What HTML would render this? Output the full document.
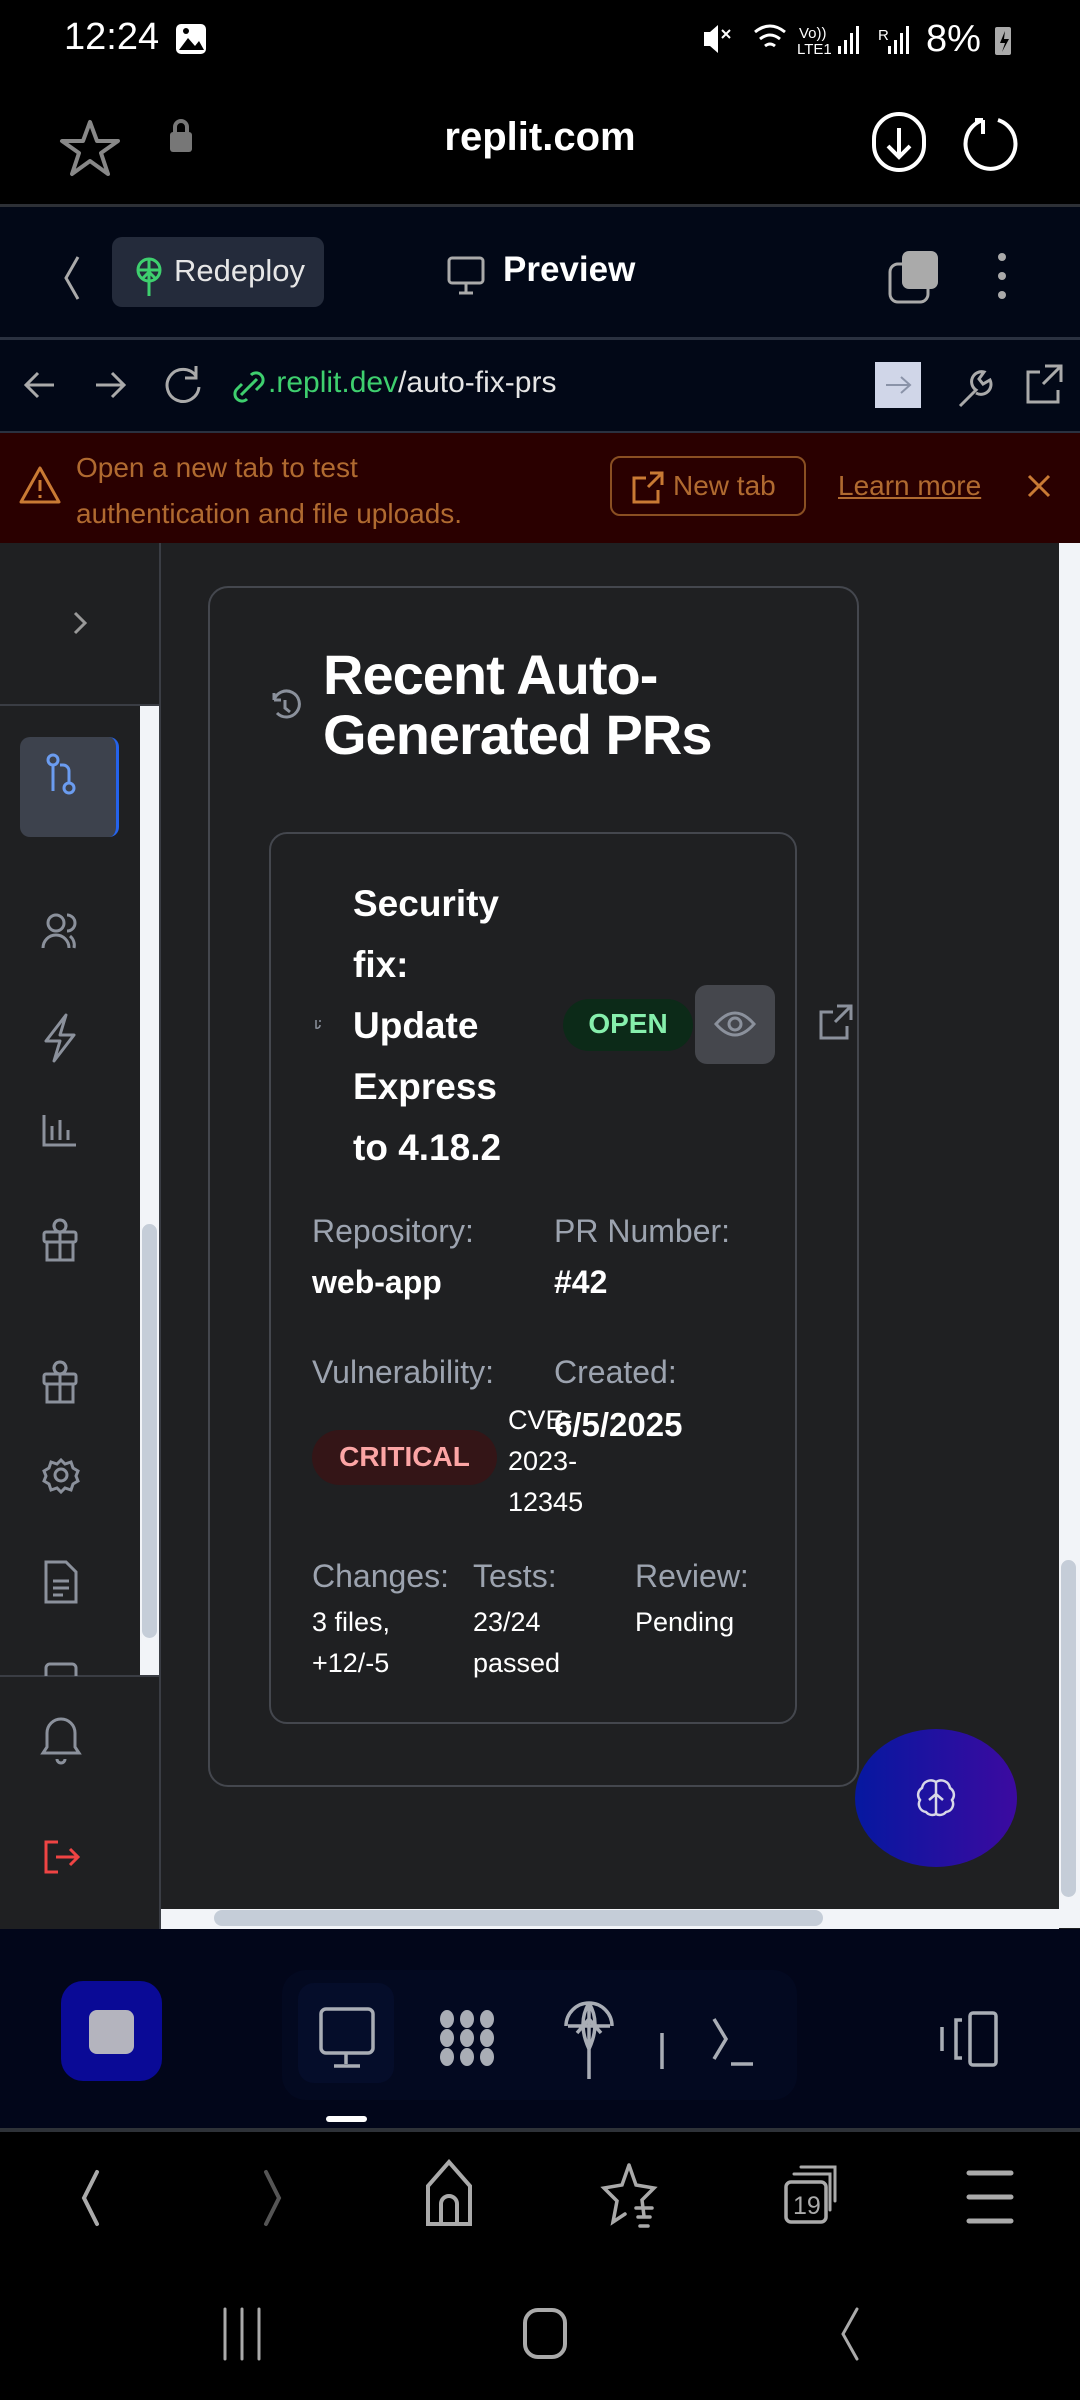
<!DOCTYPE html>
<html><head><meta charset="utf-8">
<style>
*{margin:0;padding:0;box-sizing:border-box}
body{width:1080px;height:2400px;background:#000;position:relative;overflow:hidden;font-family:"Liberation Sans",sans-serif;color:#fff}
.a{position:absolute}
svg{position:absolute;overflow:visible}
.t{white-space:nowrap}
</style></head><body>

<!-- status bar -->
<div class="a t" style="left:64px;top:16px;font-size:38px;color:#fff">12:24</div>
<div class="a" style="left:176px;top:24px;width:30px;height:30px;border-radius:5px;background:#fff"></div>
<svg style="left:0;top:0" width="1080" height="100"><path d="M179 50 L188 38 L195 46 L199 41 L204 50Z" fill="#000"/><circle cx="186" cy="31" r="3" fill="#000"/></svg>
<svg style="left:0;top:0" width="1080" height="100">
<path d="M704 32 h6 l8 -7 v28 l-8 -7 h-6z" fill="#fff"/><path d="M722 30 l8 8 M730 30 l-8 8" stroke="#fff" stroke-width="2"/>
<g stroke="#fff" stroke-width="3" fill="none"><path d="M755 32 q15-12 30 0"/><path d="M760 39 q10-8 20 0"/><path d="M765 46 q5-4 10 0"/></g>
<text x="799" y="38" font-size="15" fill="#fff" font-family="Liberation Sans">Vo))</text>
<text x="797" y="54" font-size="15" fill="#fff" font-family="Liberation Sans">LTE1</text>
<g fill="#fff"><rect x="838" y="46" width="3" height="8"/><rect x="844" y="40" width="3" height="14"/><rect x="850" y="33" width="3" height="21"/><rect x="856" y="26" width="3" height="28"/>
<rect x="888" y="46" width="3" height="8"/><rect x="894" y="40" width="3" height="14"/><rect x="900" y="33" width="3" height="21"/><rect x="906" y="26" width="3" height="28"/></g>
<text x="878" y="40" font-size="15" fill="#fff" font-family="Liberation Sans">R</text>
<rect x="995" y="27" width="16" height="28" rx="2" fill="#aaa"/><path d="M1005 31 l-5 12 h5 l-3 9 l7-13 h-5z" fill="#000"/>
</svg>
<div class="a t" style="left:926px;top:18px;font-size:38px">8%</div>

<!-- browser bar -->
<svg style="left:0;top:100px" width="1080" height="105">
<path d="M90 22 l7 19 h21 l-17 12 l7 21 l-18-13 l-18 13 l7-21 l-17-12 h21z" stroke="#888" stroke-width="4" fill="none" stroke-linejoin="round"/>
<rect x="170" y="32" width="22" height="20" rx="3" fill="#777"/><path d="M175 32 v-5 a6 6 0 0 1 12 0 v5" stroke="#777" stroke-width="4" fill="none"/>
<rect x="874" y="14" width="50" height="56" rx="25" stroke="#fff" stroke-width="4" fill="none"/><path d="M899 28 v28 M888 46 l11 11 l11-11" stroke="#fff" stroke-width="4" fill="none"/>
<path d="M983 20 a25 25 0 1 0 15 0 M983 20 v14 M983 20 h-8" stroke="#fff" stroke-width="4" fill="none"/>
</svg>
<div class="a t" style="left:0;width:1080px;text-align:center;top:115px;font-size:40px;font-weight:bold">replit.com</div>
<div class="a" style="left:0;top:204px;width:1080px;height:3px;background:#2d3036"></div>

<!-- replit header -->
<div class="a" style="left:0;top:207px;width:1080px;height:131px;background:#020817"></div>
<svg style="left:0;top:207px" width="1080" height="131">
<path d="M78 50 l-12 21 l12 21" stroke="#aaa" stroke-width="3" fill="none"/>
</svg>
<div class="a" style="left:112px;top:237px;width:212px;height:70px;border-radius:10px;background:#242b3b"></div>
<svg style="left:0;top:207px" width="1080" height="131">
<circle cx="149" cy="63" r="11" stroke="#3ecf6e" stroke-width="3" fill="none"/><path d="M138 63 h22 M149 52 v37 M142 72 l7-7 l7 7" stroke="#3ecf6e" stroke-width="3" fill="none"/>
<rect x="449" y="51" width="34" height="25" rx="3" stroke="#aaa" stroke-width="3" fill="none"/><path d="M466 77 v8 M459 86 h14" stroke="#aaa" stroke-width="3"/>
<rect x="890" y="57" width="38" height="38" rx="8" stroke="#aaa" stroke-width="3" fill="none"/><rect x="902" y="44" width="36" height="38" rx="7" fill="#aaa"/>
<circle cx="1002" cy="50" r="4" fill="#aaa"/><circle cx="1002" cy="69" r="4" fill="#aaa"/><circle cx="1002" cy="88" r="4" fill="#aaa"/>
</svg>
<div class="a t" style="left:174px;top:253px;font-size:31px;color:#e6e6e6">Redeploy</div>
<div class="a t" style="left:503px;top:250px;font-size:35px;font-weight:bold">Preview</div>
<div class="a" style="left:0;top:337px;width:1080px;height:3px;background:#2a3140"></div>

<!-- url row -->
<div class="a" style="left:0;top:340px;width:1080px;height:92px;background:#020817"></div>
<svg style="left:0;top:340px" width="1080" height="92">
<g stroke="#aaa" stroke-width="3" fill="none">
<path d="M54 45 h-28 M38 33 l-12 12 l12 12"/><path d="M96 45 h28 M112 33 l12 12 l-12 12"/>
<path d="M196 36 a16 16 0 1 0 3 11 M196 26 v12 h-11"/>
<path d="M241 55 l16-16 M247 59 a7 7 0 0 1 -10 -10 l5-5 M251 35 a7 7 0 0 1 10 10 l-5 5" stroke="#3ecf6e"/>
</g>
<rect x="875" y="22" width="46" height="46" fill="#d0d6e8"/><path d="M886 45 h24 M901 37 l9 8 l-9 8" stroke="#8a93a8" stroke-width="2" fill="none"/>
<g stroke="#aaa" stroke-width="3" fill="none"><path d="M960 66 l16-16 a10 10 0 0 1 8 -18 l-5 7 l4 5 l7 -4 a10 10 0 0 1 -14 13"/>
<path d="M1040 32 h-12 v30 h30 v-12 M1045 26 h16 v16 M1061 26 l-18 18"/></g>
</svg>
<div class="a t" style="left:268px;top:366px;font-size:30px;color:#3ecf6e">.replit.dev<span style="color:#e6e6e6">/auto-fix-prs</span></div>
<div class="a" style="left:0;top:431px;width:1080px;height:2px;background:#2a3140"></div>

<!-- banner -->
<div class="a" style="left:0;top:433px;width:1080px;height:110px;background:#2a0000"></div>
<svg style="left:0;top:433px" width="1080" height="110">
<path d="M40 35 l19 34 h-38z" stroke="#c97a34" stroke-width="3" fill="none" stroke-linejoin="round"/><path d="M40 47 v11 M40 62 v3" stroke="#c97a34" stroke-width="3"/>
<path d="M1029 43 l20 20 M1049 43 l-20 20" stroke="#c97a34" stroke-width="3"/>
<path d="M646 45 h-12 v24 h24 v-12 M650 40 h12 v12 M662 40 l-14 14" stroke="#c97a34" stroke-width="3" fill="none"/>
</svg>
<div class="a t" style="left:76px;top:445px;font-size:28px;color:#b06a30;line-height:46px">Open a new tab to test<br>authentication and file uploads.</div>
<div class="a" style="left:610px;top:456px;width:196px;height:60px;border:2px solid #8a4f22;border-radius:10px"></div>
<div class="a t" style="left:673px;top:470px;font-size:28px;color:#b06a30">New tab</div>
<div class="a t" style="left:838px;top:470px;font-size:28px;color:#b06a30;text-decoration:underline">Learn more</div>

<!-- content -->
<div class="a" style="left:0;top:543px;width:1080px;height:1386px;background:#1f2022"></div>
<div class="a" style="left:159px;top:543px;width:2px;height:1386px;background:#3a3d44"></div>
<div class="a" style="left:0;top:704px;width:160px;height:2px;background:#3a3d44"></div>
<div class="a" style="left:140px;top:706px;width:19px;height:970px;background:#f2f4f8"></div>
<div class="a" style="left:142px;top:1224px;width:15px;height:414px;border-radius:8px;background:#c5cdd8"></div>
<div class="a" style="left:0;top:1675px;width:160px;height:2px;background:#3a3d44"></div>
<div class="a" style="left:20px;top:737px;width:99px;height:100px;border-radius:10px;background:#3d424d;border-right:3px solid #2563eb"></div>
<svg style="left:0;top:543px" width="160" height="1386">
<path d="M75 70 l10 10 l-10 10" stroke="#999" stroke-width="3" fill="none"/>
<g stroke="#6b9cf0" stroke-width="3" fill="none"><circle cx="53" cy="217" r="5"/><path d="M53 222 v26"/><circle cx="69" cy="245" r="5"/><path d="M69 240 v-12 a6 6 0 0 0 -6 -6 h-3"/></g>
<g stroke="#8b919c" stroke-width="3" fill="none">
<circle cx="56" cy="380" r="8"/><path d="M43 405 a13 13 0 0 1 26 0 M67 372 a8 8 0 0 1 0 16 M74 405 a12 12 0 0 0 -4 -12"/>
<path d="M66 472 l-20 26 h14 l-6 20 l20 -26 h-14z" stroke-linejoin="round"/>
<path d="M44 572 v30 h32 M52 597 v-14 M60 597 v-20 M68 597 v-10"/>
<g transform="translate(0,689)"><rect x="44" y="0" width="32" height="10" rx="2"/><path d="M47 10 v18 h26 v-18 M60 0 v28 M60 0 a6 6 0 1 0 -6 -5 M60 0 a6 6 0 1 1 6 -5"/></g>
<g transform="translate(0,831)"><rect x="44" y="0" width="32" height="10" rx="2"/><path d="M47 10 v18 h26 v-18 M60 0 v28 M60 0 a6 6 0 1 0 -6 -5 M60 0 a6 6 0 1 1 6 -5"/></g>
<circle cx="61" cy="932" r="6"/><path d="M61 917 l4 4 l6 -2 l2 6 l5 3 l-2 5 l2 5 l-5 3 l-2 6 l-6 -2 l-4 4 l-4 -4 l-6 2 l-2 -6 l-5 -3 l2 -5 l-2 -5 l5 -3 l2 -6 l6 2z"/>
<path d="M46 1019 h20 l10 10 v30 h-30z M53 1038 h16 M53 1045 h16 M53 1052 h10"/>
<path d="M46 1133 v-8 a4 4 0 0 1 4 -4 h22 a4 4 0 0 1 4 4 v8"/>
<path d="M47 1190 a14 14 0 0 1 28 0 v14 l4 6 h-36 l4 -6z M57 1216 a4 4 0 0 0 8 0"/>
</g>
<path d="M58 1299 h-12 v30 h12 M56 1314 h22 M70 1306 l8 8 l-8 8" stroke="#ef4444" stroke-width="3" fill="none"/>
</svg>

<!-- scrollbars -->
<div class="a" style="left:1059px;top:543px;width:21px;height:1385px;background:#f2f4f8"></div>
<div class="a" style="left:1061px;top:1560px;width:15px;height:337px;border-radius:8px;background:#c5cdd8"></div>
<div class="a" style="left:161px;top:1909px;width:898px;height:20px;background:#f2f4f8"></div>
<div class="a" style="left:214px;top:1910px;width:609px;height:16px;border-radius:8px;background:#c5cdd8"></div>

<!-- outer card -->
<div class="a" style="left:208px;top:586px;width:651px;height:1201px;border:2px solid #44474e;border-radius:20px"></div>
<svg style="left:0;top:0" width="1080" height="2400">
<path d="M274 700 a13 13 0 1 1 3 13 M274 700 v-7 M274 700 h7 M285 700 v8 l5 4" stroke="#8b919c" stroke-width="3" fill="none"/>
</svg>
<div class="a" style="left:323px;top:645px;font-size:56px;font-weight:bold;line-height:60px;letter-spacing:-1px">Recent Auto-<br>Generated PRs</div>

<!-- inner card -->
<div class="a" style="left:269px;top:832px;width:528px;height:892px;border:2px solid #44474e;border-radius:18px"></div>
<div class="a" style="left:353px;top:873px;font-size:37px;font-weight:bold;line-height:61px">Security<br>fix:<br>Update<br>Express<br>to 4.18.2</div>
<svg style="left:0;top:0" width="1080" height="2400">
<path d="M316 1020 v8 a3 3 0 0 0 4 -3 M320 1020 v2" stroke="#8b919c" stroke-width="1.5" fill="none"/>
</svg>
<div class="a" style="left:563px;top:999px;width:130px;height:52px;border-radius:26px;background:#0c2a18"></div>
<div class="a t" style="left:563px;top:1008px;width:130px;text-align:center;font-size:28px;font-weight:bold;color:#86efac">OPEN</div>
<div class="a" style="left:695px;top:985px;width:80px;height:79px;border-radius:12px;background:#45474d"></div>
<svg style="left:0;top:0" width="1080" height="2400">
<path d="M716 1024 q19-22 38 0 q-19 22 -38 0z" stroke="#8b919c" stroke-width="3" fill="none"/><circle cx="735" cy="1024" r="6" stroke="#8b919c" stroke-width="3" fill="none"/>
<path d="M833 1012 h-12 v26 h26 v-12 M837 1006 h14 v14 M851 1006 l-16 16" stroke="#8b919c" stroke-width="3" fill="none"/>
</svg>

<div class="a t" style="left:312px;top:1213px;font-size:32px;color:#9ca3af">Repository:</div>
<div class="a t" style="left:554px;top:1213px;font-size:32px;color:#9ca3af">PR Number:</div>
<div class="a t" style="left:312px;top:1264px;font-size:32px;font-weight:bold">web-app</div>
<div class="a t" style="left:554px;top:1264px;font-size:32px;font-weight:bold">#42</div>
<div class="a t" style="left:312px;top:1354px;font-size:32px;color:#9ca3af">Vulnerability:</div>
<div class="a t" style="left:554px;top:1354px;font-size:32px;color:#9ca3af">Created:</div>
<div class="a" style="left:312px;top:1430px;width:185px;height:55px;border-radius:28px;background:#341517"></div>
<div class="a t" style="left:312px;top:1441px;width:185px;text-align:center;font-size:28px;font-weight:bold;color:#fca5a5">CRITICAL</div>
<div class="a" style="left:508px;top:1400px;font-size:27px;line-height:41px">CVE-<br>2023-<br>12345</div>
<div class="a t" style="left:554px;top:1406px;font-size:33px;font-weight:bold">6/5/2025</div>
<div class="a t" style="left:312px;top:1558px;font-size:32px;color:#9ca3af">Changes:</div>
<div class="a t" style="left:473px;top:1558px;font-size:32px;color:#9ca3af">Tests:</div>
<div class="a t" style="left:635px;top:1558px;font-size:32px;color:#9ca3af">Review:</div>
<div class="a" style="left:312px;top:1602px;font-size:27px;line-height:41px">3 files,<br>+12/-5</div>
<div class="a" style="left:473px;top:1602px;font-size:27px;line-height:41px">23/24<br>passed</div>
<div class="a" style="left:635px;top:1602px;font-size:27px;line-height:41px">Pending</div>

<!-- FAB -->
<div class="a" style="left:855px;top:1729px;width:162px;height:138px;border-radius:50%;background:linear-gradient(90deg,#0618a0,#3c0aa0)"></div>
<svg style="left:0;top:0" width="1080" height="2400">
<path d="M936 1782 a9 9 0 0 0 -14 6 a8 8 0 0 0 -2 12 a8 8 0 0 0 6 12 a8 8 0 0 0 10 2 a8 8 0 0 0 10 -2 a8 8 0 0 0 6 -12 a8 8 0 0 0 -2 -12 a9 9 0 0 0 -14 -6z M936 1782 v32 M929 1800 l7 -6 l7 6" stroke="#d8d8e8" stroke-width="2.5" fill="none"/>
</svg>

<!-- bottom toolbar -->
<div class="a" style="left:0;top:1929px;width:1080px;height:201px;background:#02061a"></div>
<div class="a" style="left:282px;top:1970px;width:515px;height:130px;border-radius:24px;background:#030920"></div>
<div class="a" style="left:298px;top:1983px;width:96px;height:100px;border-radius:16px;background:#050d2a"></div>
<div class="a" style="left:61px;top:1981px;width:101px;height:100px;border-radius:22px;background:#0a0a96"></div>
<div class="a" style="left:89px;top:2010px;width:45px;height:44px;border-radius:8px;background:#b4b4be"></div>
<svg style="left:0;top:1929px" width="1080" height="201">
<g stroke="#a9adb5" stroke-width="3.5" fill="none">
<rect x="321" y="80" width="52" height="44" rx="5"/><path d="M346 125 v10 M334 137 h26"/>
<path d="M589 150 v-60 M577 104 l12 -14 l12 14 M566 97 a23 23 0 1 1 46 0 M589 74 v46 M568 97 h42 M589 74 q-12 20 0 46 M589 74 q12 20 0 46"/>
<path d="M662 104 v36"/>
<path d="M714 90 l12 20 l-12 20 M731 135 h22"/>
<rect x="970" y="84" width="26" height="52" rx="3"/><path d="M962 91 h-6 v38 h6 M942 98 v24"/>
</g>
<g fill="#a9adb5">
<ellipse cx="447" cy="90" rx="7" ry="9"/><ellipse cx="467" cy="90" rx="7" ry="9"/><ellipse cx="487" cy="90" rx="7" ry="9"/>
<ellipse cx="447" cy="109" rx="7" ry="9"/><ellipse cx="467" cy="109" rx="7" ry="9"/><ellipse cx="487" cy="109" rx="7" ry="9"/>
<ellipse cx="447" cy="128" rx="7" ry="9"/><ellipse cx="467" cy="128" rx="7" ry="9"/><ellipse cx="487" cy="128" rx="7" ry="9"/>
</g>
<rect x="326" y="187" width="41" height="6" rx="3" fill="#fff"/>
</svg>
<div class="a" style="left:0;top:2128px;width:1080px;height:4px;background:#2e3238"></div>

<!-- browser nav -->
<svg style="left:0;top:2132px" width="1080" height="268">
<g stroke="#aaa" stroke-width="4" fill="none" stroke-linecap="round">
<path d="M97 40 l-13 26 l13 26"/>
<path d="M266 40 l13 26 l-13 26" stroke="#555"/>
<path d="M428 92 v-38 l21 -24 l21 24 v38z M441 92 v-20 a8 8 0 0 1 16 0 v20"/>
<path d="M629 33 l7 20 l18 3 l-12 12 l2 16 M629 33 l-7 20 l-18 3 l13 13 l-4 21 l12 -8 M636 76 h16 M638 85 h12 M640 94 h8" stroke-width="3.5"/>
<rect x="786" y="50" width="40" height="40" rx="5" stroke-width="3.5"/><path d="M794 42 h36 v36 M801 35 h34 v34" stroke-width="3"/>
<path d="M969 41 h42 M969 65 h42 M969 89 h42" stroke-width="5"/>
<path d="M225 177 v50 M242 177 v50 M259 177 v50" stroke-width="3"/>
<rect x="525" y="178" width="40" height="47" rx="13" stroke-width="4"/>
<path d="M857 177 l-14 25 l14 25" stroke-width="3"/>
</g>
<text x="793" y="82" font-size="25" fill="#aaa" font-family="Liberation Sans">19</text>
</svg>

</body></html>
